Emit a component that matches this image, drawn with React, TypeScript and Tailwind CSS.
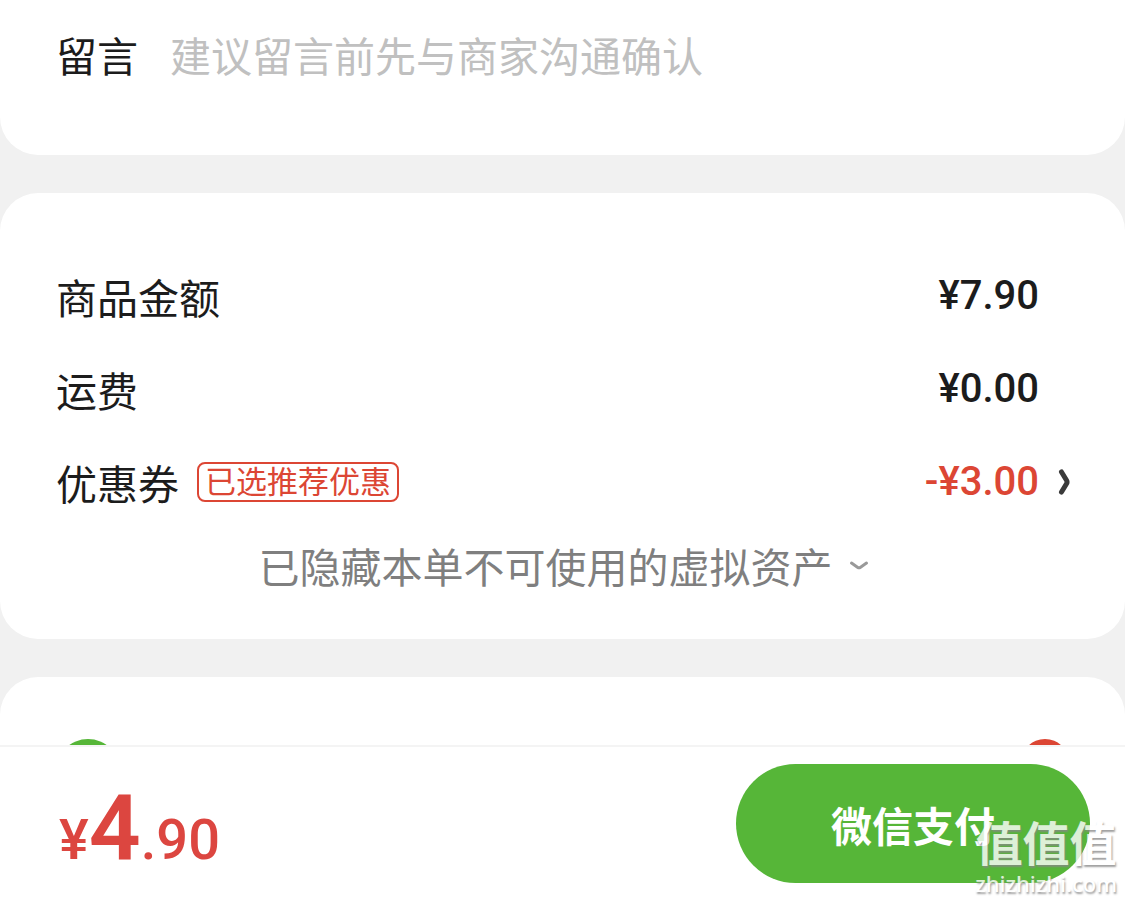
import { useState } from "react";

const rows = [
  { label: "商品金额", amount: "¥7.90" },
  { label: "运费", amount: "¥0.00" },
];

function ChevronRight() {
  return (
    <svg width="14" height="28" viewBox="0 0 14 28" fill="none" aria-hidden="true">
      <path d="M4.5 4L9.5 12.2Q10.6 14 9.5 15.8L4.5 24" stroke="#3a3a3a" strokeWidth="5" strokeLinecap="round" strokeLinejoin="round" />
    </svg>
  );
}

function ChevronDown() {
  return (
    <svg width="20" height="12" viewBox="0 0 20 12" fill="none" aria-hidden="true">
      <path d="M2.5 4L8.8 8.4Q10 9.2 11.2 8.4L17.5 4" stroke="#999" strokeWidth="3" strokeLinecap="round" strokeLinejoin="round" />
    </svg>
  );
}

function Amount({ value, red }: { value: string; red?: boolean }) {
  return (
    <span className={red ? "font-[Roboto,sans-serif] text-[40px] font-medium text-[#dc4634]" : "font-[Roboto,sans-serif] text-[40px] font-medium"}>
      {value}
    </span>
  );
}

function Watermark() {
  return (
    <div className="pointer-events-none absolute right-2 bottom-1 flex flex-col items-center gap-1 text-white opacity-80 [text-shadow:1px_2px_2px_#888]">
      <span className="text-[47px] leading-[48px] font-bold">值值值</span>
      <span className="font-['Noto_Sans',sans-serif] text-[22px] leading-7 font-medium">zhizhizhi.com</span>
    </div>
  );
}

export default function App() {
  const [note, setNote] = useState("");

  return (
    <div className="relative flex h-screen flex-col overflow-hidden bg-[#f1f1f1] font-['Noto_Sans_CJK_SC',sans-serif] text-[41px] leading-[60px] text-[#1c1c1c]">
      <main className="flex min-h-0 flex-1 flex-col gap-[38px] overflow-hidden">
        <section className="flex shrink-0 gap-8 rounded-b-[38px] bg-white px-14 pt-6 pb-[71px]">
          <label htmlFor="note">留言</label>
          <input
            id="note"
            className="h-[60px] min-w-0 flex-1 outline-none placeholder:text-[#c0c0c0]"
            placeholder="建议留言前先与商家沟通确认"
            value={note}
            onChange={(e) => setNote(e.target.value)}
          />
        </section>

        <section className="shrink-0 rounded-[38px] bg-white pt-14 pr-[54px] pb-[38px] pl-14">
          {rows.map((row) => (
            <div key={row.label} className="flex h-[93px] items-center justify-between pr-8">
              <span>{row.label}</span>
              <Amount value={row.amount} />
            </div>
          ))}
          <button className="flex h-[93px] w-full items-center">
            <span>优惠券</span>
            <span className="ml-[18px] rounded-lg border-2 border-[#dc4634] px-1.5 pb-1 text-[31px] leading-8 text-[#dc4634]">
              已选推荐优惠
            </span>
            <span className="ml-auto flex items-center gap-[18px]">
              <Amount value="-¥3.00" red />
              <ChevronRight />
            </span>
          </button>
          <button className="flex h-[73px] w-full items-center justify-center gap-4 text-[#7f7f7f]">
            已隐藏本单不可使用的虚拟资产
            <ChevronDown />
          </button>
        </section>

        <section className="flex shrink-0 items-start justify-between rounded-t-[38px] bg-white px-14 pt-[62px]">
          <span className="size-16 rounded-full bg-[#56b638]" />
          <input
            type="radio"
            name="pay"
            aria-label="微信支付"
            defaultChecked
            className="size-12 appearance-none rounded-full bg-[#dc4634]"
          />
        </section>
      </main>

      <footer className="flex shrink-0 items-center justify-between border-t-2 border-[#f4f4f4] bg-white pt-[17px] pr-[35px] pb-[18px] pl-[59px]">
        <div className="pt-5 font-[Roboto,sans-serif] text-[56px] leading-[84px] font-medium text-[#dc4640]">
          ¥<span className="text-[91px] font-semibold">4</span>.90
        </div>
        <button className="h-[119px] w-[354px] rounded-full bg-[#56b638] font-bold text-white">微信支付</button>
      </footer>

      <Watermark />
    </div>
  );
}
